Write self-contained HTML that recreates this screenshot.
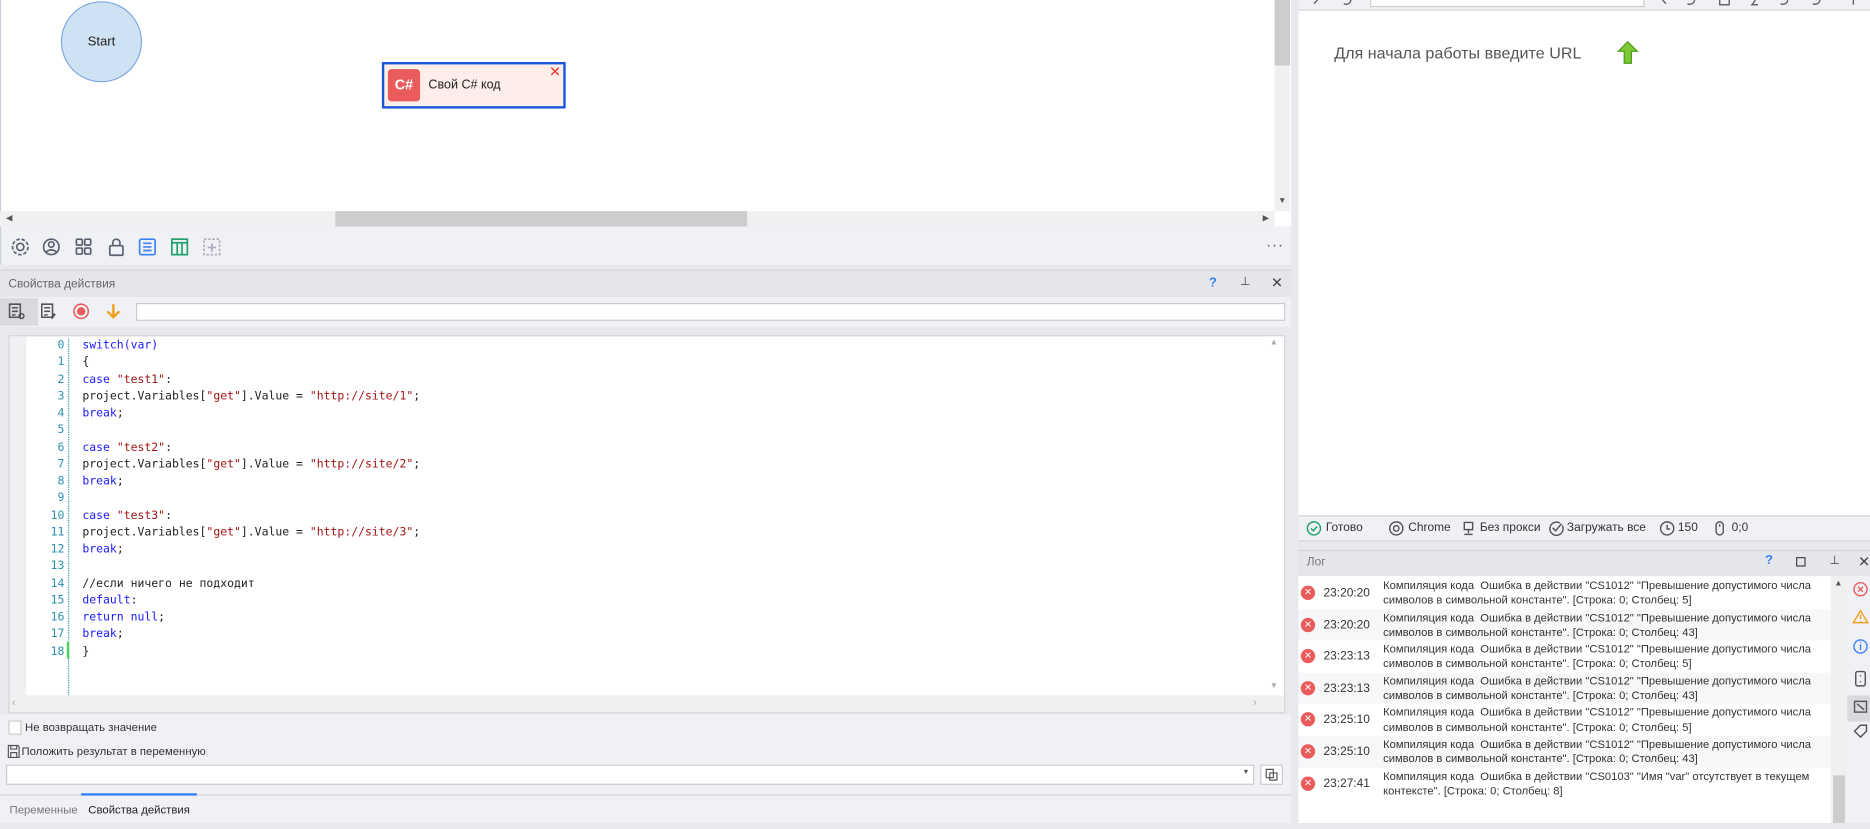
<!DOCTYPE html>
<html><head><meta charset="utf-8"><style>
*{box-sizing:border-box;margin:0;padding:0}
html,body{width:1870px;height:829px;overflow:hidden;background:#e8e9ed}
#s{position:absolute;left:0;top:0;width:1567px;height:695px;transform:scale(1.1934,1.1928);transform-origin:0 0;font-family:"Liberation Sans","DejaVu Sans",sans-serif;font-size:10px;color:#333;background:#e8e9ed}
.a{position:absolute}
.mono{font-family:"DejaVu Sans Mono","Liberation Mono",monospace;font-size:9.6px}
.kw{color:#1a1aff}.st{color:#a31515}.cm{color:#008000}
.ln{position:absolute;width:20px;text-align:right;color:#2b91af;left:34px}
.cl{position:absolute;left:69px;white-space:pre;color:#222}
.row{position:absolute;left:1088px;width:446px;height:26.6px}
.row .ic{position:absolute;left:2px;top:7px;width:12px;height:12px;border-radius:50%;background:#ea5c5c;color:#fff;font-size:8px;line-height:12px;text-align:center;font-weight:bold}
.row .t{position:absolute;left:21px;top:8px;font-size:10px;color:#333}
.row .m{position:absolute;left:71px;top:1px;font-size:9.4px;line-height:12.3px;color:#333;white-space:nowrap}
</style></head><body><div id="s">
<div class="a" style="left:0;top:0;width:1082px;height:190px;background:#fff;border-left:1px solid #c8d0dc"></div>
<div class="a" style="left:1068px;top:0;width:13px;height:177px;background:#f0f0f0"></div>
<div class="a" style="left:1068px;top:0;width:13px;height:55px;background:#cdcdcd"></div>
<div class="a" style="left:1071px;top:165px;font-size:7px;color:#555">▼</div>
<div class="a" style="left:0;top:177px;width:1068px;height:13px;background:#f0f0f0"></div>
<div class="a" style="left:281px;top:177px;width:345px;height:13px;background:#cdcdcd"></div>
<div class="a" style="left:5px;top:179px;font-size:7px;color:#555">◀</div>
<div class="a" style="left:1058px;top:179px;font-size:7px;color:#555">▶</div>
<div class="a" style="left:51px;top:1px;width:68px;height:68px;border-radius:50%;background:#cfe2f3;border:1px solid #7ea6e0;text-align:center;line-height:66px;font-size:11px;color:#222">Start</div>
<div class="a" style="left:320px;top:52px;width:154px;height:39px;background:#fdeeea;border:2px solid #1a56db"></div>
<div class="a" style="left:325px;top:58px;width:27px;height:27px;background:#ea5c5c;border-radius:3px;color:#fff;font-weight:bold;font-size:12px;text-align:center;line-height:27px">C#</div>
<div class="a" style="left:359px;top:65px;font-size:10.5px;color:#222">Свой C# код</div>
<div class="a" style="left:460px;top:53px;font-size:12px;color:#e53935;font-weight:bold">✕</div>
<div class="a" style="left:0;top:190px;width:1082px;height:32px;background:#f0f1f5;border-left:1px solid #c8d0dc"></div>
<svg class="a" style="left:8px;top:198px" width="190" height="18" viewBox="0 0 190 18" fill="none" stroke="#5a6070" stroke-width="1.4">
<circle cx="9" cy="9" r="3"/><circle cx="9" cy="9" r="6.5" stroke-dasharray="3 1.5"/>
<circle cx="35" cy="9" r="6.5"/><circle cx="35" cy="7" r="2.3"/><path d="M30.5 13.5q4.5-4 9 0"/>
<rect x="56" y="2.5" width="5" height="5" rx="1"/><rect x="63" y="2.5" width="5" height="5" rx="1"/><rect x="56" y="10" width="5" height="5" rx="1"/><rect x="63" y="10" width="5" height="5" rx="1"/>
<rect x="84" y="8" width="11" height="8" rx="1"/><path d="M86.5 8V5.5a3 3 0 0 1 6 0V8"/>
<rect x="109" y="2.5" width="13" height="13" rx="1.5" stroke="#3b82f6"/><path d="M112 6h7M112 9h7M112 12h7" stroke="#3b82f6"/>
<rect x="136" y="2.5" width="13" height="13" stroke="#22a06b"/><path d="M136 5.5h13M140.5 5.5v10M144.5 5.5v10" stroke="#22a06b"/>
<rect x="163" y="2.5" width="13" height="13" stroke="#aab" stroke-dasharray="2 1.5"/><path d="M169.5 6v7M166 9.5h7" stroke="#aab"/>
</svg>
<div class="a" style="left:1061px;top:198px;font-size:12px;color:#555;letter-spacing:1px">···</div>
<div class="a" style="left:0;top:226px;width:1082px;height:23px;background:#e4e6ea;border-top:1px solid #d4d6da"></div>
<div class="a" style="left:7px;top:233px;font-size:10px;color:#666">Свойства действия</div>
<div class="a" style="left:1013px;top:231px;font-size:11px;color:#3b82f6;font-weight:bold">?</div>
<div class="a" style="left:1039px;top:231px;font-size:10px;color:#444">⊥</div>
<div class="a" style="left:1065px;top:230px;font-size:12px;color:#444">✕</div>
<div class="a" style="left:0;top:249px;width:1082px;height:25px;background:#f0f1f5"></div>
<div class="a" style="left:0;top:250px;width:32px;height:23px;background:#d8dadf"></div>
<svg class="a" style="left:6px;top:253px" width="100" height="16" viewBox="0 0 100 16" fill="none" stroke="#555" stroke-width="1.3">
<path d="M2 2h9v11H2zM4 5h5M4 8h5M4 11h3"/><circle cx="12" cy="12" r="2"/>
<path d="M29 2h9v11h-9zM31 5h5M31 8h5M31 11h3"/><path d="M37 14l3-4" stroke-width="2"/>
<circle cx="62" cy="8" r="6" stroke="#ea5c5c"/><circle cx="62" cy="8" r="3.5" fill="#ea5c5c" stroke="none"/>
<path d="M89 2v11M84 8l5 5 5-5" stroke="#f0a020" stroke-width="2"/>
</svg>
<div class="a" style="left:114px;top:254px;width:963px;height:15px;background:#fff;border:1px solid #c8cad0"></div>
<div class="a" style="left:7px;top:281px;width:1070px;height:317px;background:#fff;border:1px solid #d0d2d6"></div>
<div class="a" style="left:8px;top:282px;width:14px;height:301px;background:#eef0f2"></div>
<div class="a" style="left:57px;top:284px;width:0;height:299px;border-left:1px dotted #2b9a9a"></div>
<div class="a" style="left:56px;top:538px;width:2px;height:14px;background:#4cd05a"></div>
<div class="a" style="left:1062px;top:282px;width:14px;height:301px;background:#fff"></div>
<div class="a" style="left:1064px;top:284px;font-size:7px;color:#aaa">▲</div>
<div class="a" style="left:1064px;top:572px;font-size:7px;color:#aaa">▼</div>
<div class="a" style="left:8px;top:583px;width:1068px;height:14px;background:#f0f0f0"></div>
<div class="a" style="left:10px;top:584px;font-size:9px;color:#aaa">‹</div>
<div class="a" style="left:1050px;top:584px;font-size:9px;color:#aaa">›</div>
<div class="a mono" style="left:0;top:283px;width:1000px;height:300px;line-height:14.25px">
<div class="ln" style="top:0">0</div><div class="cl" style="top:0"><span class="kw">switch(var)</span></div>
<div class="ln" style="top:14.25px">1</div><div class="cl" style="top:14.25px">{</div>
<div class="ln" style="top:28.5px">2</div><div class="cl" style="top:28.5px"><span class="kw">case</span> <span class="st">"test1"</span>:</div>
<div class="ln" style="top:42.75px">3</div><div class="cl" style="top:42.75px">project.Variables[<span class="st">"get"</span>].Value = <span class="st">"http://site/1"</span>;</div>
<div class="ln" style="top:57px">4</div><div class="cl" style="top:57px"><span class="kw">break</span>;</div>
<div class="ln" style="top:71.25px">5</div>
<div class="ln" style="top:85.5px">6</div><div class="cl" style="top:85.5px"><span class="kw">case</span> <span class="st">"test2"</span>:</div>
<div class="ln" style="top:99.75px">7</div><div class="cl" style="top:99.75px">project.Variables[<span class="st">"get"</span>].Value = <span class="st">"http://site/2"</span>;</div>
<div class="ln" style="top:114px">8</div><div class="cl" style="top:114px"><span class="kw">break</span>;</div>
<div class="ln" style="top:128.25px">9</div>
<div class="ln" style="top:142.5px">10</div><div class="cl" style="top:142.5px"><span class="kw">case</span> <span class="st">"test3"</span>:</div>
<div class="ln" style="top:156.75px">11</div><div class="cl" style="top:156.75px">project.Variables[<span class="st">"get"</span>].Value = <span class="st">"http://site/3"</span>;</div>
<div class="ln" style="top:171px">12</div><div class="cl" style="top:171px"><span class="kw">break</span>;</div>
<div class="ln" style="top:185.25px">13</div>
<div class="ln" style="top:199.5px">14</div><div class="cl cm" style="top:199.5px">//если ничего не подходит</div>
<div class="ln" style="top:213.75px">15</div><div class="cl" style="top:213.75px"><span class="kw">default</span>:</div>
<div class="ln" style="top:228px">16</div><div class="cl" style="top:228px"><span class="kw">return null</span>;</div>
<div class="ln" style="top:242.25px">17</div><div class="cl" style="top:242.25px"><span class="kw">break</span>;</div>
<div class="ln" style="top:256.5px">18</div><div class="cl" style="top:256.5px">}</div>
</div>
<div class="a" style="left:0;top:599px;width:1082px;height:67px;background:#f0f1f5"></div>
<div class="a" style="left:7px;top:604px;width:11px;height:12px;background:#fff;border:1px solid #ccc"></div>
<div class="a" style="left:21px;top:605px;font-size:9.5px;color:#333">Не возвращать значение</div>
<svg class="a" style="left:6px;top:624px" width="11" height="12" viewBox="0 0 11 12" fill="none" stroke="#555"><path d="M1 1h8l1 1v9H1z M3 1v3h5V1 M3 11V7h5v4"/></svg>
<div class="a" style="left:18px;top:625px;font-size:9.5px;color:#333">Положить результат в переменную</div>
<div class="a" style="left:5px;top:641px;width:1046px;height:17px;background:#fff;border:1px solid #c8cad0"></div>
<div class="a" style="left:1041px;top:645px;font-size:6px;color:#555">▼</div>
<div class="a" style="left:1056px;top:641px;width:19px;height:17px;background:#fff;border:1px solid #c8cad0"></div>
<svg class="a" style="left:1060px;top:644px" width="11" height="11" fill="none" stroke="#555"><path d="M1 1h6v7H1zM4 4h6v6H4z"/></svg>
<div class="a" style="left:0;top:666px;width:1082px;height:24px;background:#f0f1f5;border-top:1px solid #d4d6da"></div>
<div class="a" style="left:68px;top:665px;width:97px;height:2px;background:#3b82f6"></div>
<div class="a" style="left:8px;top:674px;font-size:9.5px;color:#777">Переменные</div>
<div class="a" style="left:74px;top:674px;font-size:9.5px;color:#222">Свойства действия</div>
<div class="a" style="left:1082px;top:0;width:6px;height:695px;background:#e8e9ed"></div>
<div class="a" style="left:1088px;top:0;width:479px;height:9px;background:#f0f1f5;border-bottom:1px solid #d4d6da"></div>
<div class="a" style="left:1148px;top:0;width:230px;height:6px;background:#fff;border:1px solid #ccc;border-top:none"></div>
<svg class="a" style="left:1095px;top:0" width="470" height="7" fill="none" stroke="#666" stroke-width="1.2">
<path d="M9 0l-3 3M37 0a4 4 0 0 1-6 3"/>
<path d="M298 0l3 3M325 0a4 4 0 0 1-6 3M346 0v4h8V0M376 0l-3 4h5M403 0a4 4 0 0 1-6 3M430 0a4 4 0 0 1-6 3M458 0v4"/>
</svg>
<div class="a" style="left:1088px;top:9px;width:479px;height:423px;background:#fff"></div>
<div class="a" style="left:1118px;top:37px;font-size:13.5px;color:#555">Для начала работы введите URL</div>
<svg class="a" style="left:1355px;top:34px" width="18" height="20" viewBox="0 0 18 20"><path d="M9 1L17 9H12V19H6V9H1Z" fill="#7cc934" stroke="#4c9a1a"/></svg>
<div class="a" style="left:1088px;top:432px;width:479px;height:22px;background:#f0f1f5;border-top:1px solid #d4d6da;border-bottom:1px solid #d4d6da"></div>
<svg class="a" style="left:1094px;top:436px" width="400" height="14" fill="none" stroke-width="1.2">
<circle cx="7" cy="7" r="5.5" stroke="#22a06b"/><path d="M4.5 7l2 2 3-3.5" stroke="#22a06b"/>
<circle cx="76" cy="7" r="5.5" stroke="#555"/><circle cx="76" cy="7" r="2.3" stroke="#555"/>
<path d="M133 2h7v6h-7zM136.5 8v3M133 12h7" stroke="#555"/>
<path d="M215 4.5a5.5 5.5 0 1 1-2-2M207 6.5l2.5 2.5 5-6" stroke="#555"/>
<circle cx="303" cy="7" r="5.5" stroke="#555"/><path d="M303 4v3.5h2.5" stroke="#555"/>
<rect x="344" y="1.5" width="6" height="11" rx="3" stroke="#555"/><path d="M347 3.5v2" stroke="#555"/>
</svg>
<div class="a" style="left:1111px;top:437px;font-size:10px;color:#333">Готово</div>
<div class="a" style="left:1180px;top:437px;font-size:10px;color:#333">Chrome</div>
<div class="a" style="left:1240px;top:437px;font-size:10px;color:#333">Без прокси</div>
<div class="a" style="left:1313px;top:437px;font-size:10px;color:#333">Загружать все</div>
<div class="a" style="left:1406px;top:437px;font-size:10px;color:#333">150</div>
<div class="a" style="left:1451px;top:437px;font-size:10px;color:#333">0;0</div>
<div class="a" style="left:1088px;top:461px;width:479px;height:22px;background:#e4e6ea;border-top:1px solid #d4d6da"></div>
<div class="a" style="left:1095px;top:466px;font-size:10px;color:#777">Лог</div>
<div class="a" style="left:1479px;top:464px;font-size:11px;color:#3b82f6;font-weight:bold">?</div>
<div class="a" style="left:1505px;top:467px;width:8px;height:8px;border:1px solid #444"></div>
<div class="a" style="left:1533px;top:465px;font-size:10px;color:#444">⊥</div>
<div class="a" style="left:1557px;top:464px;font-size:12px;color:#444">✕</div>
<div class="a" style="left:1088px;top:483px;width:479px;height:207px;background:#fff"></div>
<div class="row" style="top:484px;background:#fff"><div class="ic">✕</div><div class="t">23:20:20</div><div class="m">Компиляция кода &nbsp;Ошибка в действии "CS1012" "Превышение допустимого числа<br>символов в символьной константе". [Строка: 0; Столбец: 5]</div></div>
<div class="row" style="top:510.6px;background:#f6f7f9"><div class="ic">✕</div><div class="t">23:20:20</div><div class="m">Компиляция кода &nbsp;Ошибка в действии "CS1012" "Превышение допустимого числа<br>символов в символьной константе". [Строка: 0; Столбец: 43]</div></div>
<div class="row" style="top:537.2px;background:#fff"><div class="ic">✕</div><div class="t">23:23:13</div><div class="m">Компиляция кода &nbsp;Ошибка в действии "CS1012" "Превышение допустимого числа<br>символов в символьной константе". [Строка: 0; Столбец: 5]</div></div>
<div class="row" style="top:563.8px;background:#f6f7f9"><div class="ic">✕</div><div class="t">23:23:13</div><div class="m">Компиляция кода &nbsp;Ошибка в действии "CS1012" "Превышение допустимого числа<br>символов в символьной константе". [Строка: 0; Столбец: 43]</div></div>
<div class="row" style="top:590.4px;background:#fff"><div class="ic">✕</div><div class="t">23:25:10</div><div class="m">Компиляция кода &nbsp;Ошибка в действии "CS1012" "Превышение допустимого числа<br>символов в символьной константе". [Строка: 0; Столбец: 5]</div></div>
<div class="row" style="top:617px;background:#f6f7f9"><div class="ic">✕</div><div class="t">23:25:10</div><div class="m">Компиляция кода &nbsp;Ошибка в действии "CS1012" "Превышение допустимого числа<br>символов в символьной константе". [Строка: 0; Столбец: 43]</div></div>
<div class="row" style="top:643.6px;background:#fff"><div class="ic">✕</div><div class="t">23:27:41</div><div class="m">Компиляция кода &nbsp;Ошибка в действии "CS0103" "Имя "var" отсутствует в текущем<br>контексте". [Строка: 0; Столбец: 8]</div></div>
<div class="a" style="left:1534px;top:483px;width:14px;height:207px;background:#f0f0f0"></div>
<div class="a" style="left:1536px;top:650px;width:10px;height:40px;background:#cdcdcd"></div>
<div class="a" style="left:1537px;top:486px;font-size:7px;color:#555">▲</div>
<div class="a" style="left:1548px;top:483px;width:19px;height:207px;background:#f0f1f5"></div>
<div class="a" style="left:1548px;top:583px;width:19px;height:22px;background:#d8dade"></div>
<svg class="a" style="left:1552px;top:486px" width="15" height="140" fill="none" stroke-width="1.2">
<circle cx="7" cy="8" r="5.5" stroke="#ea5c5c"/><path d="M5 6l4 4M9 6l-4 4" stroke="#ea5c5c"/>
<path d="M7 26l6 10H1z" stroke="#f0a020"/><path d="M7 29.5v3.5M7 34.5v.8" stroke="#f0a020"/>
<circle cx="7" cy="56" r="5.5" stroke="#3b82f6"/><path d="M7 54v5M7 52v.8" stroke="#3b82f6"/>
<rect x="3" y="77" width="8" height="12" rx="1.5" stroke="#555"/><path d="M7 80v1M7 85v1" stroke="#555"/>
<rect x="2" y="102" width="10" height="9" stroke="#555"/><path d="M4 104l6 5" stroke="#555"/>
<path d="M2 127l5-5h5v5l-5 5z" stroke="#555"/>
</svg>
<div class="a" style="left:1085px;top:690px;width:482px;height:5px;background:#e8e9ed"></div>
</div></body></html>
